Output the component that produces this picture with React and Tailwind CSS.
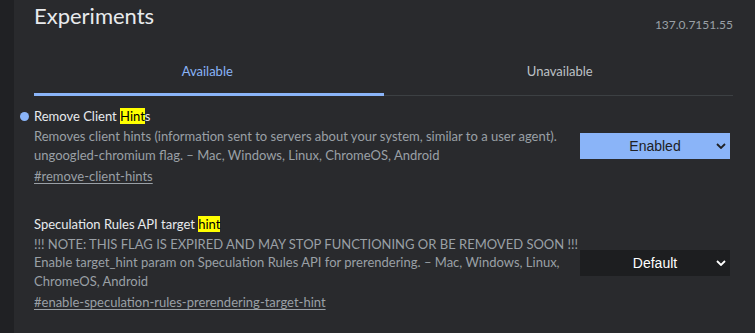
import React from "react";

const font = { fontFamily: 'Lato, "Noto Sans", sans-serif' };

function Chevron({ className }) {
  return (
    <svg viewBox="0 0 10 6" className={className} fill="none">
      <path d="M1 1l4 4 4-4" stroke="currentColor" strokeWidth="1.8" />
    </svg>
  );
}

function Select({ value, active }) {
  return (
    <div
      className={
        "relative flex h-[26px] w-[150px] items-center justify-center " +
        (active ? "bg-[#8ab4f8] text-[#202124]" : "bg-[#1d1e20] text-white")
      }
      style={{ fontFamily: '"Liberation Sans", Arial, sans-serif' }}
    >
      <span className="text-[14px]">{value}</span>
      <Chevron className="absolute right-[4px] top-[10px] h-[6px] w-[10px]" />
    </div>
  );
}

function Mark({ children }) {
  return <span className="bg-[#ffff00] text-black">{children}</span>;
}

function Experiment({ dot, title, lines, link, value, active }) {
  return (
    <div className="flex items-center justify-between">
      <div className="w-[530px] whitespace-nowrap">
        <div className="relative text-[13px] leading-[18px] text-[#e8eaed]">
          {dot && (
            <span className="absolute left-[-14px] top-[5px] h-[9px] w-[9px] rounded-full bg-[#8ab4f8]" />
          )}
          {title}
        </div>
        <div className="mt-[2px] text-[13px] leading-[18.5px] text-[#9aa0a6]">
          {lines.map((l, i) => (
            <div key={i}>{l}</div>
          ))}
        </div>
        <div className="mt-[3px] text-[13px] leading-[18.5px] text-[#9aa0a6] underline underline-offset-2">
          {link}
        </div>
      </div>
      <Select value={value} active={active} />
    </div>
  );
}

export default function App() {
  return (
    <div className="flex h-[333px] w-[755px] overflow-hidden bg-[#292a2d]" style={font}>
      <div className="w-[14px] bg-[#202124]" />
      <div className="flex-1 pl-[20px] pr-[22px]">
        <div className="flex items-start justify-between">
          <h1 className="text-[22px] leading-[32px] text-[#e8eaed]">Experiments</h1>
          <div className="mt-[16px] text-[12px] text-[#9aa0a6]">137.0.7151.55</div>
        </div>
        <div className="mt-[28px] flex text-[13px] leading-[18px]">
          <div className="flex-1 pr-[6px] text-center text-[#8ab4f8]">Available</div>
          <div className="flex-1 text-center text-[#bdc1c6]">Unavailable</div>
        </div>
        <div className="mt-[13px] flex items-end">
          <div className="h-[3px] flex-1 bg-[#8ab4f8]" />
          <div className="h-px flex-1 bg-[#3c4043]" />
        </div>
        <div className="mt-[11px] pr-[3px]">
          <Experiment
            dot
            title={
              <>
                Remove Client <Mark>Hint</Mark>s
              </>
            }
            lines={[
              "Removes client hints (information sent to servers about your system, similar to a user agent).",
              "ungoogled-chromium flag. – Mac, Windows, Linux, ChromeOS, Android",
            ]}
            link="#remove-client-hints"
            value="Enabled"
            active
          />
          <div className="mt-[29px]">
            <Experiment
              title={
                <>
                  Speculation Rules API target <Mark>hint</Mark>
                </>
              }
              lines={[
                "!!! NOTE: THIS FLAG IS EXPIRED AND MAY STOP FUNCTIONING OR BE REMOVED SOON !!!",
                "Enable target_hint param on Speculation Rules API for prerendering. – Mac, Windows, Linux,",
                "ChromeOS, Android",
              ]}
              link="#enable-speculation-rules-prerendering-target-hint"
              value="Default"
            />
          </div>
        </div>
      </div>
    </div>
  );
}
